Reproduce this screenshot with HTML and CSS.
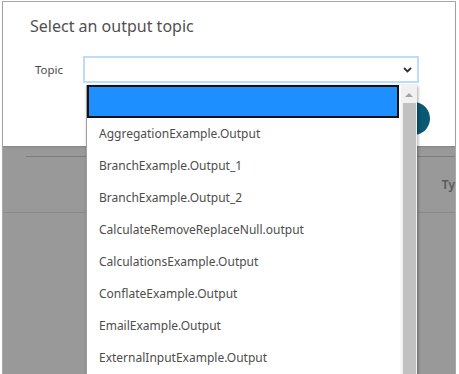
FILE: index.html
```html
<!DOCTYPE html>
<html lang="en">
<head>
    <meta charset="UTF-8">
    <meta name="viewport" content="width=device-width, initial-scale=1.0">
    <title>Select an output topic</title>
    <link rel="stylesheet" href="styles.css">
</head>
<body>
    <div class="frame">
        <div class="modal">
            <h2 class="modal-title">Select an output topic</h2>
            <div class="field">
                <label class="field-label" for="topic">Topic</label>
                <div class="select">
                    <span class="select-value" id="topic"></span>
                    <svg class="chevron" width="9" height="6" viewBox="0 0 9 6">
                        <path d="M1 1 L4.5 4.5 L8 1" fill="none" stroke="#333" stroke-width="1.8"/>
                    </svg>
                </div>
            </div>
            <div class="modal-footer">
                <span class="round-btn"></span>
            </div>

            <div class="listbox">
                <div class="options">
                    <div class="option selected"></div>
                    <div class="option">AggregationExample.Output</div>
                    <div class="option">BranchExample.Output_1</div>
                    <div class="option">BranchExample.Output_2</div>
                    <div class="option">CalculateRemoveReplaceNull.output</div>
                    <div class="option">CalculationsExample.Output</div>
                    <div class="option">ConflateExample.Output</div>
                    <div class="option">EmailExample.Output</div>
                    <div class="option">ExternalInputExample.Output</div>
                </div>
                <div class="scrollbar">
                    <span class="scroll-up"></span>
                    <span class="scroll-thumb"></span>
                </div>
            </div>
        </div>

        <div class="backdrop">
            <div class="table-head">
                <span class="col-title">Ty</span>
            </div>
            <div class="table-rule"></div>
        </div>
    </div>
</body>
</html>
```

FILE: styles.css
```css
html, body {
    margin: 0;
    padding: 0;
    height: 100%;
    background: #ffffff;
    overflow: hidden;
}
body {
    font-family: "Noto Sans", "Open Sans", sans-serif;
    color: #4a4a4a;
}
.frame {
    margin: 1px 3px 0 2px;
    height: 373px;
    border: 1px solid #a9a9a9;
    border-bottom: none;
    display: flex;
    flex-direction: column;
    box-sizing: border-box;
    position: relative;
}
.modal {
    height: 144px;
    background: #fff;
    box-sizing: border-box;
    padding: 12px 0 0 27px;
    display: flex;
    flex-direction: column;
    position: relative;
    box-shadow: 0 1px 2px rgba(0, 0, 0, 0.15);
}
.modal-title {
    margin: 0;
    font-size: 16px;
    font-weight: 400;
    line-height: 24px;
    color: #505050;
}
.field {
    display: flex;
    align-items: center;
    margin-top: 18px;
}
.field-label {
    width: 48px;
    padding-left: 5px;
    font-size: 11.5px;
    color: #4a4a4a;
}
.select {
    width: 336px;
    height: 27px;
    box-sizing: border-box;
    border: 2px solid #bcdcfa;
    background: #fff;
    display: flex;
    align-items: center;
    justify-content: flex-end;
    padding-right: 5px;
}
.select-value {
    flex: 1;
}
.modal-footer {
    display: flex;
    justify-content: flex-end;
    padding-right: 25px;
    margin-top: 19px;
}
.round-btn {
    width: 33px;
    height: 33px;
    border-radius: 50%;
    background: #0b5873;
}

/* open dropdown list, drawn over the dialog */
.listbox {
    position: absolute;
    left: 83px;
    top: 83px;
    width: 330px;
    height: 300px;
    background: #fff;
    border-left: 1px solid #a0a0a0;
    display: flex;
    box-shadow: 1px 1px 3px rgba(0, 0, 0, 0.35);
    z-index: 2;
}
.options {
    flex: 1;
}
.option {
    height: 32px;
    line-height: 32px;
    padding-left: 12px;
    font-size: 12px;
    color: #4d4d4d;
    white-space: nowrap;
}
.option.selected {
    height: 33px;
    box-sizing: border-box;
    background: #1e8fff;
    border: 2px solid #111;
    margin-right: 1px;
}
.scrollbar {
    width: 16px;
    background: #f1f1f1;
    border-left: 1px solid #fafafa;
    display: flex;
    flex-direction: column;
    align-items: center;
}
.scroll-up {
    margin-top: 8px;
    width: 0;
    height: 0;
    border-left: 4px solid transparent;
    border-right: 4px solid transparent;
    border-bottom: 4px solid #a3a3a3;
}
.scroll-thumb {
    margin-top: 6px;
    width: 13px;
    flex: 1;
    background: #c1c1c1;
}

.backdrop {
    flex: 1;
    background: #999999;
    padding-top: 10px;
}
.table-head {
    margin-left: 23px;
    height: 55px;
    border-top: 1px solid #7d7d7d;
    display: flex;
    align-items: center;
    justify-content: flex-end;
}
.col-title {
    font-size: 12px;
    font-weight: 600;
    color: #5a5a5a;
    margin-bottom: 1px;
}
.table-rule {
    border-top: 1px solid #8a8a8a;
}
```
